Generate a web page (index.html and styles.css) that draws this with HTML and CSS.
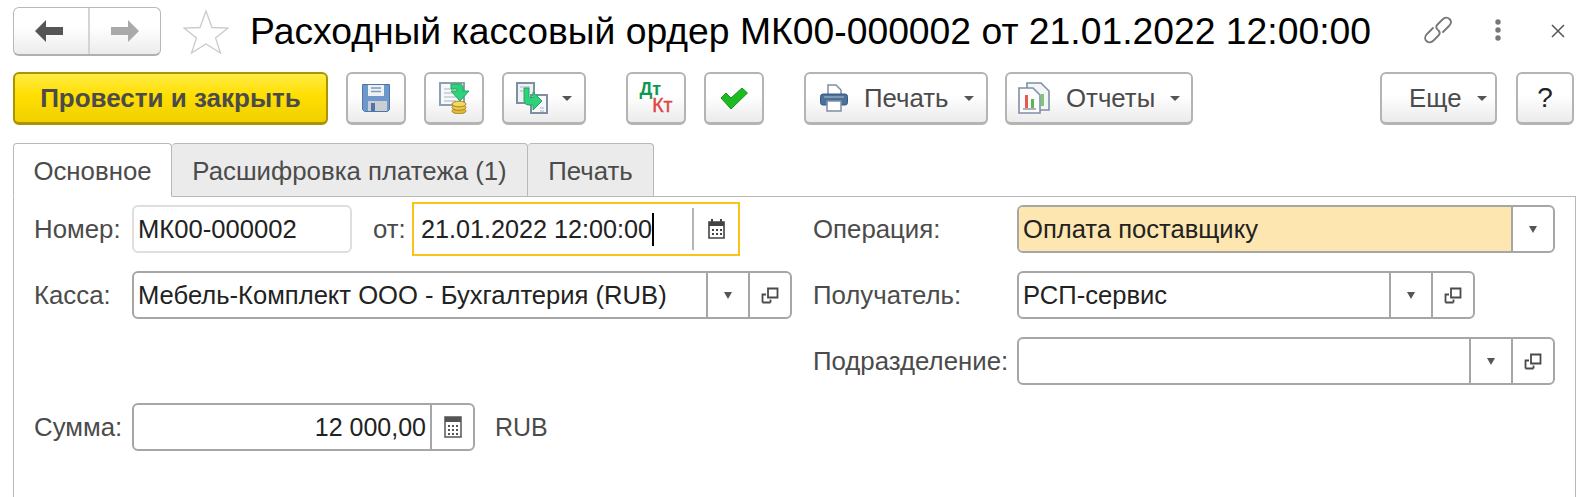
FILE: index.html
```html
<!DOCTYPE html>
<html lang="ru">
<head>
<meta charset="utf-8">
<title>Расходный кассовый ордер</title>
<link rel="stylesheet" href="styles.css">
</head>
<body>
<svg class="defs" width="0" height="0">
  <defs>
    <symbol id="open" viewBox="0 0 18 17"><path d="M7 1.500h9.500v9H7zM1.500 7.500H5M1.500 6.500v9M1.500 15.500h8M9.500 12.500v3" fill="none" stroke="#4a4a4a" stroke-width="1.800"/></symbol>
  </defs>
</svg>
<header class="head">
  <div class="nav">
    <div class="nav-btn nav-back"><svg width="28" height="22" viewBox="0 0 28 22"><path d="M0 11 11 0v7h17v8H11v7z" fill="#555"/></svg></div>
    <div class="nav-btn nav-fwd"><svg width="28" height="22" viewBox="0 0 28 22"><path d="M28 11 17 0v7H0v8h17v7z" fill="#aaa"/></svg></div>
  </div>
  <svg class="star" width="46" height="44" viewBox="0 0 46 44"><path d="M23 1l6 16.500 16 .5-12.500 10 5 15L23 34 8.500 43l5-15L1 18l16-.5z" fill="#fff" stroke="#c6cbd0" stroke-width="1.300"/></svg>
  <h1 class="title">Расходный кассовый ордер МК00-000002 от 21.01.2022 12:00:00</h1>
  <svg class="link" width="30" height="30" viewBox="0 0 30 30"><g fill="none" stroke="#777" stroke-width="1.800" stroke-linecap="round"><path d="M10 13 4 19c-2.500 2.500-2.500 5 -.5 7s4.500 2 7-.5l5-5c1.500-1.500 1.500-3.500 0-5"/><path d="M20 17l6-6c2.500-2.500 2.500-5 .5-7s-4.500-2-7 .5l-5 5c-1.500 1.500-1.500 3.500 0 5"/></g></svg>
  <svg class="dots" width="6" height="22" viewBox="0 0 6 22"><circle cx="3" cy="3" r="2.700" fill="#777"/><circle cx="3" cy="11" r="2.700" fill="#777"/><circle cx="3" cy="19" r="2.700" fill="#777"/></svg>
  <svg class="close" width="14" height="14" viewBox="0 0 14 14"><path d="M1 1l12 12M13 1 1 13" stroke="#555" stroke-width="1.500"/></svg>
</header>

<div class="toolbar">
  <button class="btn primary">Провести и закрыть</button>
  <button class="btn w60 g18"><svg width="28" height="28" viewBox="0 0 28 28"><path d="M.5.500h27v25l-2 2H2.500l-2-2z" fill="#6f97c9" stroke="#4f76a8"/><path d="M6 1h16v11H6z" fill="#eef2f6"/><path d="M9 4h10M9 7.500h10" stroke="#7f9cc0" stroke-width="1.300"/><path d="M6 17h19v10H6z" fill="#c9ced2"/><path d="M9 19h4v8H9z" fill="#4f76a8"/></svg></button>
  <button class="btn w60 g18"><svg width="31" height="32" viewBox="0 0 31 32"><path d="M1 1h24v22H1z" fill="#f6f8fa" stroke="#8f9fb3" stroke-width="2"/><path d="M5 7h10M5 11h12M5 15h12M5 19h12" stroke="#a9b4c0" stroke-width="1.200"/><ellipse cx="20" cy="29" rx="7" ry="2.800" fill="#e2b93b" stroke="#a98620"/><ellipse cx="20" cy="25.500" rx="7" ry="2.800" fill="#edc94a" stroke="#a98620"/><ellipse cx="20" cy="22" rx="7" ry="2.800" fill="#f5d862" stroke="#a98620"/><path d="M12 2h8c3 0 4 2 4 4v3h6l-9 10-9-10h6V7h-6z" fill="#2fd27a" stroke="#1fa85c"/></svg></button>
  <button class="btn w84 g18 split"><svg width="32" height="32" viewBox="0 0 32 32"><path d="M1 1h17v20H1z" fill="#eef1f4" stroke="#7f8fa3" stroke-width="2"/><path d="M15 13h16v18H15z" fill="#f6f8fa" stroke="#7f8fa3" stroke-width="2"/><path d="M4 5h10M4 9h3M24 26h4M24 29h4" stroke="#a9b4c0" stroke-width="1.200"/><path d="M8 6h5v8c0 1 .5 1.500 1.500 1.500H17V10l9 9-9 9v-5h-4c-3.500 0-5-2-5-5z" fill="#2fd27a" stroke="#1fa85c"/></svg><i class="caret"></i></button>
  <button class="btn w60 g40"><span class="dtkt"><span class="dt">Дт</span><span class="kt">Кт</span></span></button>
  <button class="btn w60 g18"><svg width="28" height="21" viewBox="0 0 28 21"><path d="M1 10l5-5 5 5L22 0l5.500 5L11 21z" fill="#1dbb22" stroke="#1a8f22"/></svg></button>
  <button class="btn w184 g40 labeled"><svg width="28" height="28" viewBox="0 0 28 28"><path d="M8 1h8l5 5v8H8z" fill="#fff" stroke="#7f8fa3" stroke-width="1.500"/><rect x="0.500" y="10" width="27" height="11" rx="2.500" fill="#4c7199" stroke="#335a85"/><path d="M4 13h20" stroke="#8fa9c4" stroke-width="1.500"/><path d="M7 17h14v10H7z" fill="#fff" stroke="#7f8fa3" stroke-width="1.500"/></svg><span class="btn-text">Печать</span><i class="caret"></i></button>
  <button class="btn w188 g17 labeled"><svg width="32" height="32" viewBox="0 0 32 32"><path d="M9 1h14l8 8v19H9z" fill="#f3f5f7" stroke="#7f8fa3" stroke-width="1.600"/><path d="M17 10h3v14h-3zM23 12h3v12h-3z" fill="#7fc76f"/><path d="M1 6h14l7 7v18H1z" fill="#fbfcfd" stroke="#7f8fa3" stroke-width="1.600"/><path d="M7 13h3v13H7z" fill="#e9574f"/><path d="M13 17h3v9h-3z" fill="#5ab552"/><path d="M5 27h13" stroke="#8f9aa6" stroke-width="1.500"/></svg><span class="btn-text">Отчеты</span><i class="caret"></i></button>
  <button class="btn w117 more"><span class="btn-text">Еще</span><i class="caret"></i></button>
  <button class="btn w58 g19 help">?</button>
</div>

<nav class="tabs">
  <div class="tab active">Основное</div>
  <div class="tab t2">Расшифровка платежа (1)</div>
  <div class="tab t3">Печать</div>
</nav>

<main class="panel">
  <div class="col col-left">
    <div class="row">
      <label class="lbl lbl-l">Номер:</label>
      <div class="field f-num"><span class="val">МК00-000002</span></div>
      <label class="lbl lbl-ot">от:</label>
      <div class="field f-date">
        <span class="val date-val">21.01.2022 12:00:00<i class="cursor"></i></span>
        <span class="cell cell-date"><svg width="17" height="20" viewBox="0 0 17 20"><path d="M1 3h15v16H1z" fill="none" stroke="#444" stroke-width="1.600"/><path d="M1 3h15v4H1z" fill="#444"/><path d="M4 0v4M13 0v4" stroke="#444" stroke-width="2"/><path d="M4 10h2v2H4zM8 10h2v2H8zM12 10h2v2h-2zM4 14h2v2H4zM8 14h2v2H8zM12 14h2v2h-2z" fill="#444"/></svg></span>
      </div>
    </div>
    <div class="row">
      <label class="lbl lbl-l">Касса:</label>
      <div class="field f-kassa">
        <span class="val">Мебель-Комплект ООО - Бухгалтерия (RUB)</span>
        <span class="cell"><i class="tri"></i></span>
        <span class="cell"><svg width="18" height="17"><use href="#open"/></svg></span>
      </div>
    </div>
    <div class="row"></div>
    <div class="row">
      <label class="lbl lbl-l">Сумма:</label>
      <div class="field f-sum">
        <span class="val val-r">12 000,00</span>
        <span class="cell cell-calc"><svg width="18" height="22" viewBox="0 0 18 22"><path d="M1 1h16v20H1z" fill="none" stroke="#555" stroke-width="1.500"/><path d="M1 1h16v5H1z" fill="#555"/><path d="M4 9h2v2H4zM8 9h2v2H8zM12 9h2v2h-2zM4 13h2v2H4zM8 13h2v2H8zM12 13h2v2h-2zM4 17h2v2H4zM8 17h2v2H8zM12 17h2v2h-2z" fill="#555"/></svg></span>
      </div>
      <span class="unit">RUB</span>
    </div>
  </div>
  <div class="col col-right">
    <div class="row">
      <label class="lbl lbl-r">Операция:</label>
      <div class="field f-op">
        <span class="val val-hl">Оплата поставщику</span>
        <span class="cell"><i class="tri"></i></span>
      </div>
    </div>
    <div class="row">
      <label class="lbl lbl-r">Получатель:</label>
      <div class="field f-rec">
        <span class="val">РСП-сервис</span>
        <span class="cell"><i class="tri"></i></span>
        <span class="cell"><svg width="18" height="17"><use href="#open"/></svg></span>
      </div>
    </div>
    <div class="row">
      <label class="lbl lbl-r">Подразделение:</label>
      <div class="field f-div">
        <span class="val"></span>
        <span class="cell"><i class="tri"></i></span>
        <span class="cell"><svg width="18" height="17"><use href="#open"/></svg></span>
      </div>
    </div>
  </div>
</main>
</body>
</html>
```

FILE: styles.css
```css
* { box-sizing: border-box; }
html, body { margin: 0; height: 100%; }
body {
  background: #fff;
  font-family: "Liberation Sans", Arial, sans-serif;
  font-size: 25.8px;
  color: #4b4b4b;
  overflow: hidden;
  height: 497px;
  display: flex;
  flex-direction: column;
}
.defs { position: absolute; }

.head {
  display: flex;
  align-items: center;
  height: 49px;
  margin: 7px 31px 0 13px;
}
.nav {
  display: flex;
  width: 148px;
  height: 49px;
  border: 1px solid #b8b8b8;
  border-bottom: 2px solid #b0b0b0;
  border-radius: 6px;
  background: linear-gradient(#fff 40%, #ececec);
}
.nav-btn { display: flex; align-items: center; justify-content: center; }
.nav-back { width: 76px; border-right: 2px solid #d4d4d4; padding-right: 4px; }
.nav-fwd { flex: 1; }
.star { margin-left: 22px; }
.title {
  margin: 0 0 0 21px;
  font-size: 37.3px;
  font-weight: 400;
  color: #000;
  white-space: nowrap;
  line-height: 49px;
}
.link { margin-left: auto; margin-top: -4px; }
.dots { margin-left: 42px; margin-top: -3px; }
.close { margin-left: 50px; margin-top: -2px; }

.toolbar {
  display: flex;
  margin: 16px 22px 0 13px;
  height: 53px;
}
.btn {
  height: 53px;
  padding: 0;
  display: flex;
  align-items: center;
  justify-content: center;
  font: inherit;
  color: #4b4b4b;
  background: linear-gradient(#fff 45%, #ebebeb);
  border: 2px solid #b4b4b4;
  border-bottom-width: 3px;
  border-radius: 6px;
}
.primary {
  width: 315px;
  font-weight: 700;
  font-size: 26px;
  background: linear-gradient(#ffeb45, #ffdf00 45%, #f0d000);
  border-color: #ab9400;
}
.w60 { width: 60px; }
.w84 { width: 84px; }
.w184 { width: 184px; }
.w188 { width: 188px; }
.w117 { width: 117px; }
.w58 { width: 58px; }
.g17 { margin-left: 17px; }
.g18 { margin-left: 18px; }
.g19 { margin-left: 19px; }
.g40 { margin-left: 40px; }
.split { justify-content: flex-start; padding-left: 12px; }
.split .caret { margin-left: 14px; }
.labeled { justify-content: flex-start; padding-left: 14px; }
.w188.labeled { padding-left: 11px; }
.btn-text { margin-left: 16px; }
.labeled .caret { margin-left: 15px; }
.more { margin-left: auto; justify-content: flex-start; padding-left: 11px; }
.more .caret { margin-left: 15px; }
.help { color: #222; font-size: 28px; }
.caret {
  display: block;
  width: 0;
  height: 0;
  border: 5px solid transparent;
  border-top: 5px solid #555;
  border-bottom: 0;
}
.dtkt {
  display: flex;
  flex-direction: column;
  width: 33px;
  font-size: 18px;
  font-weight: 700;
  line-height: 16px;
  margin-top: -2px;
}
.dt { color: #0b9a50; align-self: flex-start; }
.kt { color: #e14444; align-self: flex-end; font-weight: 400; font-size: 19.500px; -webkit-text-stroke: .4px #e14444; }

.tabs {
  display: flex;
  margin: 18px 0 0 13px;
  height: 54px;
  position: relative;
  z-index: 1;
}
.tab {
  display: flex;
  align-items: center;
  padding-top: 2px;
  justify-content: center;
  background: #ebebeb;
  border: 1px solid #b8b8b8;
  border-left: 0;
  border-radius: 4px 4px 0 0;
}
.tab.active {
  width: 159px;
  background: #fff;
  border-left: 1px solid #b8b8b8;
  border-bottom-color: #fff;
}
.t2 { width: 356px; }
.t3 { width: 126px; }

.panel {
  flex: 1;
  display: flex;
  margin: -1px 20px 0 13px;
  padding: 8px 0 0 20px;
  border: 1px solid #b8b8b8;
  border-bottom: 0;
}
.col { display: flex; flex-direction: column; gap: 18px; }
.col-left { width: 780px; }
.col-right { margin-left: -1px; }
.row { display: flex; align-items: center; height: 48px; }
.lbl { flex: none; white-space: nowrap; }
.lbl-l { width: 98px; }
.lbl-ot { margin: 0 0 0 21px; width: 39px; }
.lbl-r { width: 204px; }
.field {
  display: flex;
  height: 48px;
  border: 2px solid #a6a6a6;
  border-radius: 6px;
  color: #222;
  font-size: 25.6px;
  background: #fff;
  overflow: hidden;
}
.val {
  flex: 1;
  min-width: 0;
  display: flex;
  align-items: center;
  padding-left: 4px;
  white-space: nowrap;
}
.val-r { justify-content: flex-end; padding: 0 4px 0 0; font-size: 25px; }
.val-hl { background: #fde6b0; }
.cell {
  flex: none;
  width: 42px;
  display: flex;
  align-items: center;
  justify-content: center;
  border-left: 2px solid #a6a6a6;
}
.tri {
  display: block;
  width: 0;
  height: 0;
  border: 4px solid transparent;
  border-top: 7px solid #555;
  border-bottom: 0;
}
.f-num { width: 220px; border-color: #dedede; }
.f-date {
  width: 328px;
  height: 54px;
  margin: -3px 0;
  border: 2px solid #f8c31c;
  border-radius: 0;
}
.date-val { padding-left: 7px; font-size: 25.2px; }
.cursor {
  display: inline-block;
  width: 2px;
  height: 33px;
  background: #000;
}
.cell-date { width: 46px; margin: 4px 0; border-left-color: #b5b5b5; }
.f-kassa { width: 660px; }
.f-sum { width: 343px; }
.cell-calc { width: 43px; }
.unit { margin-left: 20px; font-size: 25px; }
.f-op { width: 538px; }
.f-rec { width: 458px; }
.f-div { width: 538px; }
```
